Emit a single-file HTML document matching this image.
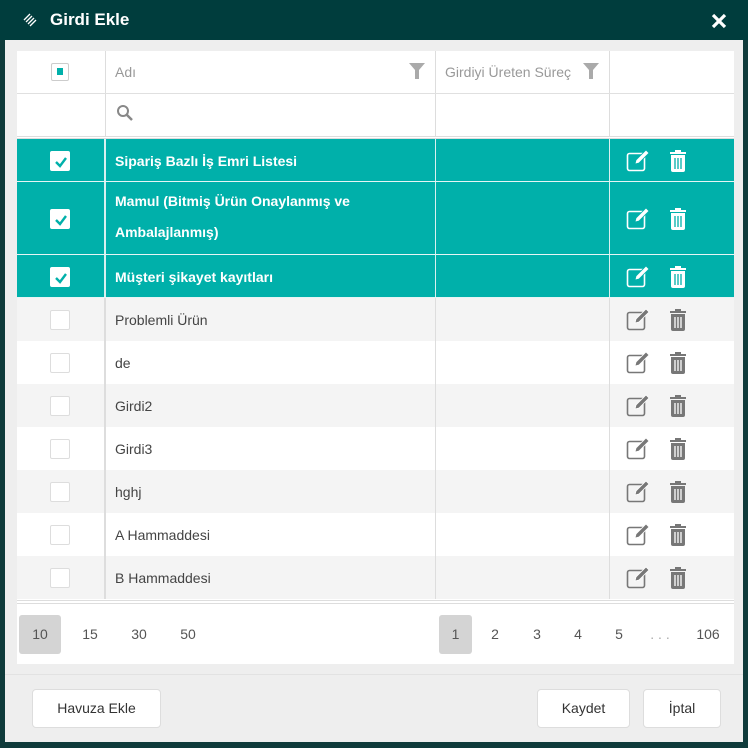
<!DOCTYPE html><html><head><style>
*{box-sizing:border-box;margin:0;padding:0}
body{width:748px;height:748px;background:#0f3b3b;font-family:"Liberation Sans",sans-serif;position:relative;overflow:hidden}
.hdr{position:absolute;left:0;top:0;width:748px;height:40px;background:#003d3d}
.hdr .t{position:absolute;left:50px;top:10px;color:#fff;font-size:17px;font-weight:bold}
.body{position:absolute;left:5px;top:40px;width:738px;height:702px;background:#eeeeee}
.tbl{position:absolute;left:17px;top:51px;width:717px;height:613px;background:#fff}
.r{position:absolute;left:0;width:717px}
.c{position:absolute;top:0;bottom:0;border-right:1px solid #ddd}
.c.n{border-right:2px solid #ddd}
.sel{background:#00b0aa;color:#fff;font-weight:bold;border-bottom:1px solid #e6f5f5}
.sel .c{border-right-color:#d8f0ef}
.odd{background:#f4f4f4}
.txt{position:absolute;left:98px;font-size:14px;color:#444}
.sel .txt{color:#fff}
.cb{position:absolute;left:33px;width:20px;height:20px;border:1px solid #ddd;background:#fff;border-radius:2px}
.btn{position:absolute;top:689px;height:39px;background:#fff;border:1px solid #ddd;border-radius:4px;font-size:14px;color:#333;text-align:center;line-height:37px}
.pg{position:absolute;top:615px;height:39px;line-height:39px;font-size:14px;color:#555;text-align:center}
</style></head><body>
<div class="hdr">
<svg style="position:absolute;left:22px;top:12px" width="16" height="16" viewBox="0 0 16 16"><g stroke="#fff" stroke-width="1.3"><line x1="2" y1="8" x2="8" y2="2"/><line x1="4" y1="10" x2="10" y2="4"/><line x1="6" y1="12" x2="12" y2="6"/><line x1="8" y1="14" x2="14" y2="8"/></g></svg>
<div class="t">Girdi Ekle</div>
<svg style="position:absolute;left:711px;top:13px" width="16" height="16" viewBox="0 0 16 16"><path d="M2 2L14 14M14 2L2 14" stroke="#fff" stroke-width="3.2"/></svg>
</div>
<div class="body"></div>
<div style="position:absolute;left:5px;top:674px;width:738px;height:1px;background:#e2e2e2"></div>
<div class="tbl">
<div class="r" style="top:0;height:43px;border-bottom:1px solid #e0e0e0"><div class="c" style="left:0;width:89px"></div><div class="c" style="left:89px;width:330px"></div><div class="c" style="left:419px;width:174px"></div>
<div style="position:absolute;left:34px;top:12px;width:18px;height:18px;border:1px solid #ccc;border-radius:2px"><div style="position:absolute;left:5px;top:4px;width:6px;height:7px;background:#00b0aa"></div></div>
<div class="txt" style="top:13px;color:#999">Adı</div>
<svg style="position:absolute;left:392px;top:12px" width="16" height="16"><path d="M0 0H16L10 7V16H6V7Z" fill="#aaa"/></svg>
<div class="txt" style="left:428px;top:13px;color:#999">Girdiyi Üreten Süreç</div>
<svg style="position:absolute;left:566px;top:12px" width="16" height="16"><path d="M0 0H16L10 7V16H6V7Z" fill="#aaa"/></svg>
</div>
<div class="r" style="top:43px;height:45px;border-bottom:3px double #ddd"><div class="c" style="left:0;width:89px"></div><div class="c" style="left:89px;width:330px"></div><div class="c" style="left:419px;width:174px"></div>
<svg style="position:absolute;left:99px;top:10px" width="18" height="18"><circle cx="7" cy="7" r="5" fill="none" stroke="#888" stroke-width="2"/><path d="M11 11L16 16" stroke="#888" stroke-width="2.5"/></svg></div>
<div id="rows"></div>
<div style="position:absolute;left:0;top:549px;width:717px;height:4px;border-top:1px solid #ddd;border-bottom:1px solid #ddd"></div>
</div>
<div class="pg" style="left:19px;width:42px;background:#d4d4d4;border-radius:3px">10</div>
<div class="pg" style="left:70px;width:40px">15</div>
<div class="pg" style="left:119px;width:40px">30</div>
<div class="pg" style="left:168px;width:40px">50</div>
<div class="pg" style="left:439px;width:33px;background:#d4d4d4;border-radius:3px">1</div>
<div class="pg" style="left:480px;width:30px">2</div>
<div class="pg" style="left:522px;width:30px">3</div>
<div class="pg" style="left:563px;width:30px">4</div>
<div class="pg" style="left:604px;width:30px">5</div>
<div class="pg" style="left:645px;width:30px;color:#aaa">. . .</div>
<div class="pg" style="left:690px;width:36px">106</div>
<div class="btn" style="left:32px;width:129px">Havuza Ekle</div>
<div class="btn" style="left:537px;width:93px">Kaydet</div>
<div class="btn" style="left:643px;width:78px">İptal</div>
<script>
var rows=[["Sipariş Bazlı İş Emri Listesi",1,43],["Mamul (Bitmiş Ürün Onaylanmış ve<br>Ambalajlanmış)",1,73],["Müşteri şikayet kayıtları",1,43],["Problemli Ürün",0,43],["de",0,43],["Girdi2",0,43],["Girdi3",0,43],["hghj",0,43],["A Hammaddesi",0,43],["B Hammaddesi",0,43]];
var y=88,h="",i=0;
rows.forEach(function(r){var s=r[1],H=r[2],col=s?"#fff":"#777";
var cls="r "+(s?"sel":(i%2==1?"odd":""));i++;
var ck=s?'<svg style="position:absolute;left:3px;top:3px" width="14" height="14"><path d="M2 7L6 11L12 3" fill="none" stroke="#00b0aa" stroke-width="2.4"/></svg>':'';
var mid=H/2;
h+='<div class="'+cls+'" style="top:'+y+'px;height:'+H+'px"><div class="c n" style="left:0;width:89px"></div><div class="c" style="left:89px;width:330px"></div><div class="c" style="left:419px;width:174px"></div>'+
'<div class="cb" style="top:'+(mid-10)+'px;'+(s?'border-color:#fff':'')+'">'+ck+'</div>'+
'<div class="txt" style="top:'+(H>50?4:mid-9)+'px;line-height:'+(H>50?'31px':'18px')+'">'+r[0]+'</div>'+
'<svg style="position:absolute;left:609px;top:'+(mid-12)+'px" width="24" height="24"><rect x="1.5" y="4.5" width="17" height="17" rx="2" fill="none" stroke="'+col+'" stroke-width="1.6"/><path d="M9 15L10 11L20 1L23 4L13 14Z" fill="'+col+'" stroke="'+(s?"#00b0aa":"#fff")+'" stroke-width="0.8"/></svg>'+
'<svg style="position:absolute;left:651px;top:'+(mid-12)+'px" width="20" height="24"><path d="M7 1H13V3H18V5H2V3H7Z" fill="'+col+'"/><path d="M3 6H17V21Q17 23 15 23H5Q3 23 3 21Z" fill="'+col+'"/><path d="M7 9V20M10 9V20M13 9V20" stroke="'+(s?"#00b0aa":"#fff")+'" stroke-width="1.3"/></svg></div>';
y+=H;});
document.getElementById("rows").outerHTML=h;
</script>
</body></html>
